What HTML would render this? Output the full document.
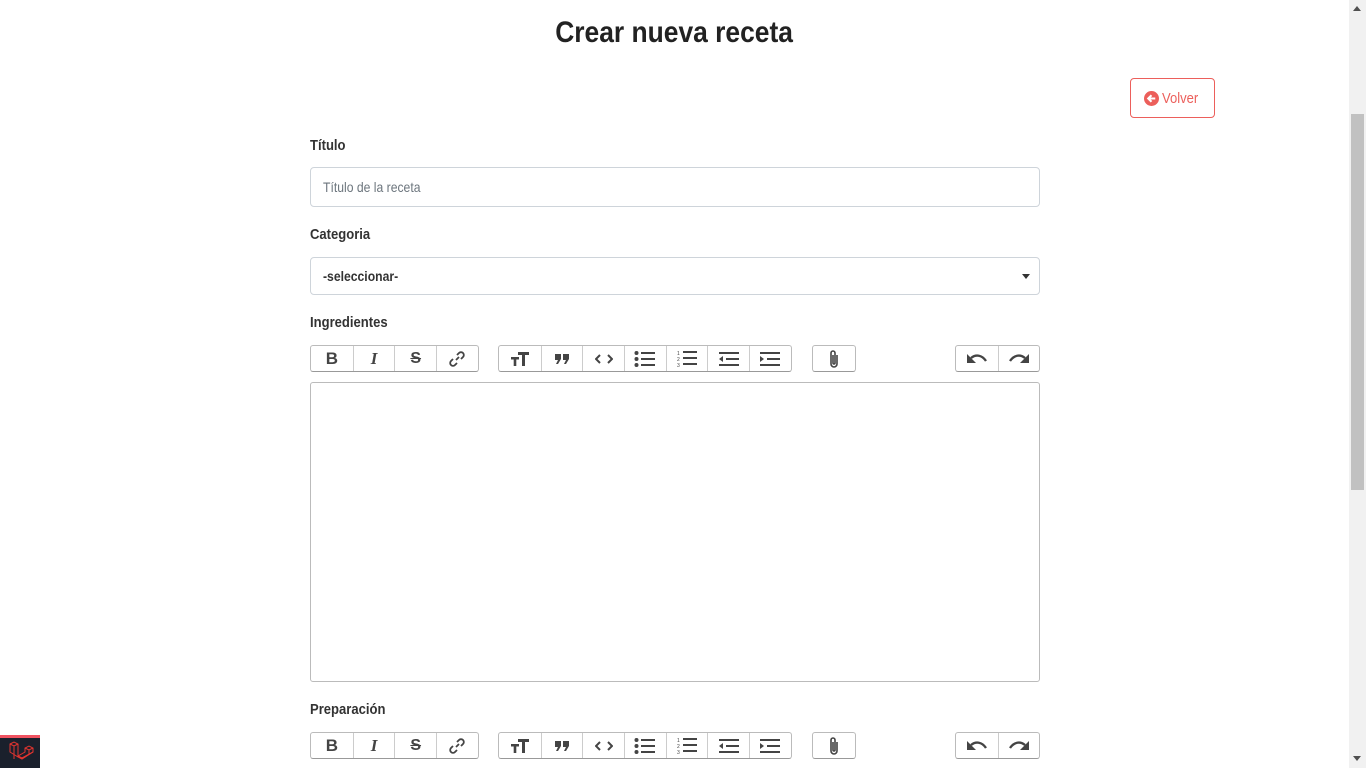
<!DOCTYPE html>
<html><head><meta charset="utf-8"><style>
*{box-sizing:border-box}
body{margin:0;width:1366px;height:768px;overflow:hidden;background:#fff;font-family:"Liberation Sans",sans-serif;color:#212529;position:relative}
.n{display:inline-block;transform:scaleX(.87);transform-origin:left center;white-space:nowrap}
.sb{position:absolute;right:0;top:0;width:17px;height:768px;background:#f1f1f1}
.sb .th{position:absolute;left:2px;top:114px;width:13px;height:376px;background:#c1c1c1}
.sb .up{position:absolute;left:4px;top:6px;border:4px solid transparent;border-bottom:5px solid #505050;border-top:0}
.sb .dn{position:absolute;left:4px;top:756px;border:4px solid transparent;border-top:5px solid #505050;border-bottom:0}
h1{position:absolute;top:16px;left:0;width:1349px;text-align:center;margin:0;font-size:30px;font-weight:bold;color:#222}
h1 span{display:inline-block;transform:scaleX(.88)}
.btn{position:absolute;left:1130px;top:78px;width:85px;height:40px;border:1px solid #ec5f5b;border-radius:4px;color:#ec5f5b;font-size:15px;display:flex;align-items:center;justify-content:center;gap:3px}
.lbl{position:absolute;left:310px;font-size:15px;font-weight:bold;color:#333}
.inp{position:absolute;left:310px;width:730px;border:1px solid #ced4da;border-radius:4px;font-size:15px;padding-left:12px;display:flex;align-items:center}
.tb{position:absolute;height:27px;display:flex;border:1px solid #bbb;border-radius:3px;border-bottom-color:#999;background:#fff}
.tb div{width:41.7px;height:100%;border-left:1px solid #ccc;display:flex;align-items:center;justify-content:center}
.tb div:first-child{border-left:0}
.ed{position:absolute;left:310px;top:382px;width:730px;height:300px;border:1px solid #bbb;border-radius:3px}
.logo{position:absolute;left:0;top:735px;width:40px;height:33px;background:#1a202c;border-top:3px solid #f05361}
svg{display:block}
</style></head><body>
<h1><span>Crear nueva receta</span></h1>
<div class="btn"><svg width="15" height="15" viewBox="0 0 16 16"><circle cx="8" cy="8" r="8" fill="#ec5f5b"/><path d="M12 8H5M8 4.5L4.5 8 8 11.5" stroke="#fff" stroke-width="2.2" fill="none"/></svg><span class="n" style="width:40px">Volver</span></div>
<div class="lbl" style="top:137px"><span class="n">Título</span></div>
<div class="inp" style="top:167px;height:40px;color:#6c757d;font-size:14px"><span class="n">Título de la receta</span></div>
<div class="lbl" style="top:226px"><span class="n">Categoria</span></div>
<div class="inp" style="top:257px;height:38px;color:#333;font-size:14px;font-weight:bold"><span class="n">-seleccionar-</span><span style="position:absolute;right:9px;top:16px;border:4px solid transparent;border-top:5px solid #333;border-bottom:0"></span></div>
<div class="lbl" style="top:314px"><span class="n">Ingredientes</span></div>
<div id="t1"></div>
<div class="ed"></div>
<div class="lbl" style="top:701px"><span class="n">Preparación</span></div>
<div class="logo"><svg width="40" height="30" viewBox="0 0 40 30"><g stroke="#e3342f" stroke-width="1" fill="none"><path d="M10 6l4-2 4 2v12l7-4v-4l4-2 4 2v4l-11 7-4-2-8-5z"/><path d="M10 6l4 2 4-2M14 8v13M25 10l4 2 4-2M29 12v4M18 18l4 2 11-6"/></g></svg></div>
<div class="sb"><div class="up"></div><div class="th"></div><div class="dn"></div></div>
<script>
const I={
b:'<span style="font:bold 17px Liberation Sans;color:#444">B</span>',
i:'<span style="font:italic bold 17px Liberation Serif;color:#444">I</span>',
s:'<span style="font:bold 16px Liberation Sans;color:#444;text-decoration:line-through">S</span>',
l:'<svg width="18" height="18" viewBox="0 0 18 18"><g stroke="#444" stroke-width="1.8" fill="none"><path d="M8 10l3-3"/><path d="M9 5l2-2a2.5 2.5 0 0 1 4 4l-2 2"/><path d="M9 13l-2 2a2.5 2.5 0 0 1-4-4l2-2"/></g></svg>',
h:'<svg width="20" height="16" viewBox="0 0 20 16"><path d="M1 6h8v2.5H6.3V15H3.7V8.5H1zM8 1h11v3h-4v11h-3V4H8z" fill="#444"/></svg>',
q:'<svg width="16" height="12" viewBox="0 0 16 12"><path d="M1 1h6v5l-3 5H2l2-4H1zM9 1h6v5l-3 5h-2l2-4H9z" fill="#444"/></svg>',
c:'<svg width="18" height="12" viewBox="0 0 18 12"><path d="M5 2L1 6l4 4M13 2l4 4-4 4" stroke="#444" stroke-width="2" fill="none"/></svg>',
u:'<svg width="22" height="16" viewBox="0 0 22 16"><g fill="#444"><circle cx="2.5" cy="2" r="2"/><circle cx="2.5" cy="8" r="2"/><circle cx="2.5" cy="14" r="2"/><rect x="7" y="1" width="14" height="2"/><rect x="7" y="7" width="14" height="2"/><rect x="7" y="13" width="14" height="2"/></g></svg>',
o:'<svg width="22" height="17" viewBox="0 0 22 17"><g fill="#444"><rect x="7" y="1" width="14" height="2"/><rect x="7" y="7" width="14" height="2"/><rect x="7" y="13" width="14" height="2"/><text x="1" y="5" font-size="5" font-family="Liberation Sans">1</text><text x="1" y="11" font-size="5" font-family="Liberation Sans">2</text><text x="1" y="17" font-size="5" font-family="Liberation Sans">3</text></g></svg>',
d:'<svg width="22" height="16" viewBox="0 0 22 16"><g fill="#444"><rect x="1" y="1" width="20" height="2"/><rect x="8" y="7" width="13" height="2"/><rect x="1" y="13" width="20" height="2"/><path d="M5 5L1 8l4 3z"/></g></svg>',
n:'<svg width="22" height="16" viewBox="0 0 22 16"><g fill="#444"><rect x="1" y="1" width="20" height="2"/><rect x="8" y="7" width="13" height="2"/><rect x="1" y="13" width="20" height="2"/><path d="M1 5l4 3-4 3z"/></g></svg>',
a:'<svg width="12" height="20" viewBox="0 0 12 20"><path d="M9 6v9a3 3 0 0 1-6 0V4a2 2 0 0 1 4 0v10a1 1 0 0 1-2 0V6" stroke="#444" stroke-width="1.6" fill="none"/></svg>',
un:'<svg width="22" height="14" viewBox="0 0 22 14"><path d="M5 6c5-4 11-3 15 3" stroke="#444" stroke-width="2.4" fill="none"/><path d="M1 2v9h9z" fill="#444"/></svg>',
re:'<svg width="22" height="14" viewBox="0 0 22 14"><path d="M17 6C12 2 6 3 2 9" stroke="#444" stroke-width="2.4" fill="none"/><path d="M21 2v9h-9z" fill="#444"/></svg>'};
function bar(top){let h='';
[[310,'b i s l'],[498,'h q c u o d n'],[812,'a'],[955,'un re']].forEach(([x,k])=>{const ks=k.split(' ');h+=`<div class="tb" style="left:${x}px;top:${top}px;width:${ks.length*41.7+2}px">`+ks.map(q=>'<div>'+I[q]+'</div>').join('')+'</div>'});return h}
document.getElementById('t1').outerHTML=bar(345)+bar(732);
</script>
</body></html>
